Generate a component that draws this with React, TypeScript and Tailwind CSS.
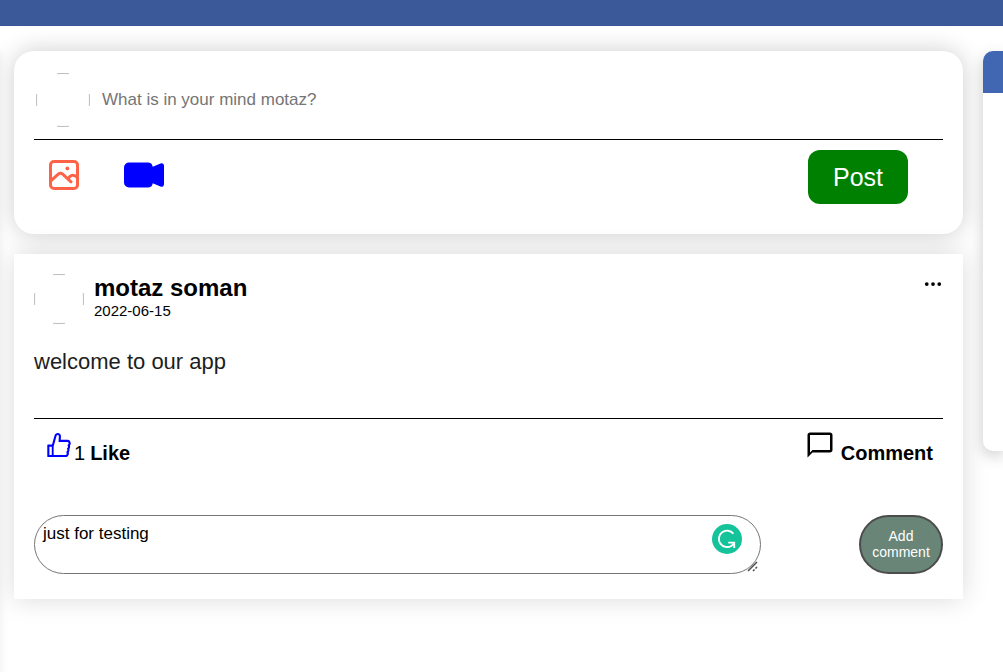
import { useState } from "react";
import { AiOutlineLike } from "react-icons/ai";
import { BsCameraVideoFill, BsThreeDots } from "react-icons/bs";
import { MdChatBubbleOutline } from "react-icons/md";

function EmptyAvatar({ size, label }: { size: number; label: string }) {
  const c = size / 2;
  const e = size - 0.5;
  return (
    <svg width={size} height={size} role="img" aria-label={label} className="shrink-0" stroke="#bdbdbd" fill="none">
      <path
        d={`M${c - 6} .7Q${c} .3 ${c + 6} .7M${c - 6} ${e - 0.2}Q${c} ${e + 0.2} ${c + 6} ${e - 0.2}M.7 ${c - 6}Q.3 ${c} .7 ${c + 6}M${e - 0.2} ${c - 6}Q${e + 0.2} ${c} ${e - 0.2} ${c + 6}`}
      />
    </svg>
  );
}

function ImageIcon() {
  return (
    <svg width="30" height="30" viewBox="0 0 30 30" fill="none" stroke="currentColor" strokeWidth="3">
      <rect x="1.5" y="1.5" width="27" height="27" rx="3.5" />
      <circle cx="18.4" cy="8.4" r="1.9" fill="currentColor" stroke="none" />
      <path d="M1.5 21.2L9.3 14.2Q11.5 12.3 13.7 14.2L22 21.8" strokeLinecap="round" />
      <path d="M19 19.2C20.8 15 24.8 13.8 28.4 17.6" />
    </svg>
  );
}

function GrammarIcon() {
  return (
    <svg width="30" height="30" viewBox="0 0 30 30" fill="none" className="absolute top-[9px] right-[19px]">
      <circle cx="15" cy="15" r="15" fill="#15c39a" />
      <path d="M21.4 9.6A8.2 8.2 0 1 0 19.6 21.7Q21.2 20.6 22 18.9" stroke="white" strokeWidth="1.9" />
      <path d="M16.3 18.6H22.2V24" stroke="white" strokeWidth="1.9" />
    </svg>
  );
}

function Composer() {
  return (
    <section className="rounded-[20px] bg-white px-5 pt-5 pb-[30px] shadow-[0_0_25px_rgba(0,0,0,0.2)]">
      <div className="flex items-center gap-3 border-b border-black px-0.5 pt-0.5 pb-3">
        <EmptyAvatar size={54} label="motaz" />
        <input
          type="text"
          aria-label="Post text"
          placeholder="What is in your mind motaz?"
          className="min-w-0 flex-1 text-[17px] leading-5 outline-none placeholder:text-[#757575]"
        />
      </div>
      <div className="flex items-start pt-2.5 pr-[35px] pl-[15px]">
        <button type="button" aria-label="Add image" className="mt-2.5 text-[#ff6347]">
          <ImageIcon />
        </button>
        <button type="button" aria-label="Add video" className="mt-[5px] ml-[45px] text-[#0000ff]">
          <BsCameraVideoFill size={40} />
        </button>
        <button
          type="button"
          className="ml-auto rounded-xl bg-[#008000] px-[25px] py-3 text-[25px] leading-[30px] text-white"
        >
          Post
        </button>
      </div>
    </section>
  );
}

function Post() {
  const [comment, setComment] = useState("just for testing");
  return (
    <article className="mt-5 bg-white px-5 pt-5 pb-[25px] shadow-[0_0_25px_rgba(0,0,0,0.15)]">
      <header className="flex items-start gap-2.5">
        <EmptyAvatar size={50} label="motaz soman" />
        <div>
          <h2 className="text-2xl leading-7 font-bold">motaz soman</h2>
          <p className="text-[15px] leading-[18px]">2022-06-15</p>
        </div>
        <button type="button" aria-label="More options" className="ml-auto">
          <BsThreeDots size={20} />
        </button>
      </header>
      <p className="border-b border-black pt-[25px] pb-[43px] text-[22px] leading-[26px] text-[#1c1e21]">
        welcome to our app
      </p>
      <div className="flex justify-between px-2.5 pt-[11px]">
        <button type="button" className="flex items-start text-xl leading-6">
          <AiOutlineLike size={30} className="text-[#0000ff]" />
          <span className="mt-[11px]">1</span>
          <span className="mt-[11px] ml-[5px] font-bold">Like</span>
        </button>
        <button type="button" className="flex items-start gap-1.5 text-xl leading-6">
          <MdChatBubbleOutline size={30} />
          <span className="mt-[11px] font-bold">Comment</span>
        </button>
      </div>
      <div className="mt-[50px] flex items-start justify-between">
        <div className="relative flex w-4/5">
          <textarea
            aria-label="Comment"
            value={comment}
            onChange={(e) => setComment(e.target.value)}
            className="h-[59px] w-full resize-none overflow-hidden rounded-[30px] border border-[#767676] px-2 pt-2 text-[17px] leading-5"
          />
          <GrammarIcon />
          <svg
            width="12"
            height="12"
            viewBox="0 0 12 12"
            stroke="#4a4a4a"
            strokeWidth="1.5"
            className="pointer-events-none absolute right-[3px] bottom-[2px]"
          >
            <path d="M2 11L11 2M7 11L8.5 9.5M9.5 8.5L11 7" />
          </svg>
        </div>
        <button
          type="button"
          className="h-[59px] w-[84px] rounded-[30px] border-2 border-[#4c4c4c] bg-[#688578] pb-0.5 text-sm leading-4 text-white"
        >
          Add comment
        </button>
      </div>
    </article>
  );
}

export default function App() {
  return (
    <div className="min-h-screen overflow-hidden bg-white font-['Liberation_Sans',Arial,sans-serif] text-black">
      <div className="h-[26px] bg-[#3b5998]" />
      <div className="flex items-start pt-[25px]">
        <aside className="-ml-5 h-[640px] w-5 shadow-[0_0_10px_rgba(0,0,0,0.08)]" />
        <main className="ml-3.5 min-w-0 flex-1">
          <Composer />
          <Post />
        </main>
        <aside className="relative ml-5 h-[400px] w-5 overflow-hidden rounded-l-[10px] bg-white shadow-[0_5px_15px_rgba(0,0,0,0.2)]">
          <div className="h-[42px] bg-[#4267b2]" />
        </aside>
      </div>
    </div>
  );
}
